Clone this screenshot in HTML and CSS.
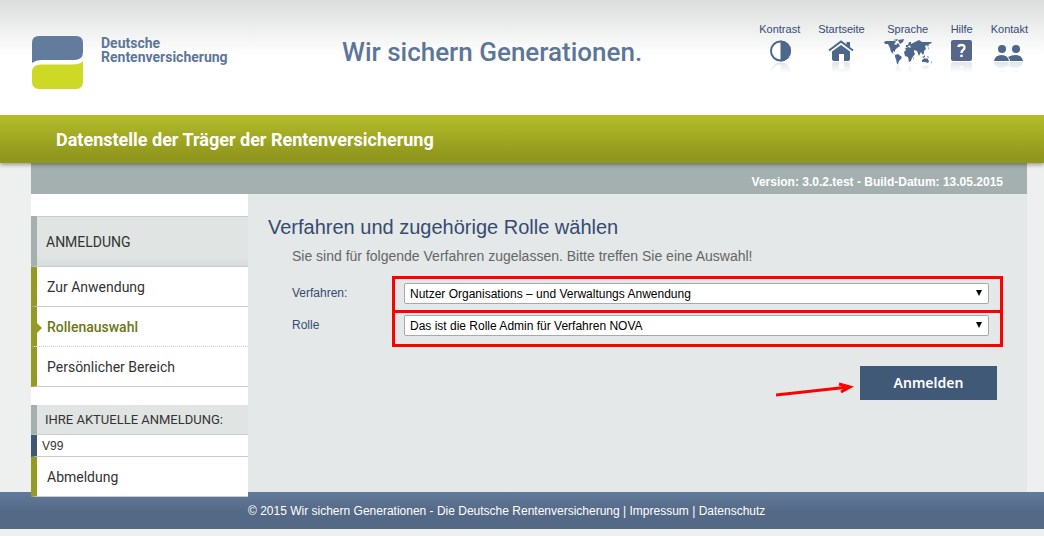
FILE: index.html
```html
<!DOCTYPE html>
<html lang="de">
<head>
<meta charset="utf-8">
<meta name="viewport" content="width=device-width, initial-scale=1">
<title>Deutsche Rentenversicherung</title>
<link rel="stylesheet" href="styles.css">
</head>
<body>
<header class="header">
  <a class="brand" href="#">
    <svg class="brand-mark" viewBox="0 0 51 53" aria-hidden="true">
      <path fill="#637b9c" d="M0 27V7Q0 0 7 0H44Q51 0 51 7V16Q51 24 42 24H10Q4 24 0 27Z"/>
      <path fill="#ced925" d="M51 25V46Q51 53 44 53H7Q0 53 0 46V36Q0 28.500 9 28.500H40Q48 28.500 51 25Z"/>
    </svg>
    <span class="brand-name">Deutsche<br>Rentenversicherung</span>
  </a>
  <p class="slogan">Wir sichern Generationen.</p>
  <nav class="tools" aria-label="Service">
    <a class="tool" href="#"><span>Kontrast</span>
      <svg class="icon" width="22" height="36" viewBox="0 0 22 36" aria-hidden="true">
        <defs>
          <linearGradient id="fade" gradientUnits="userSpaceOnUse" x1="0" y1="22" x2="0" y2="34"><stop offset="0" stop-color="#fff" stop-opacity=".2"/><stop offset="1" stop-color="#fff" stop-opacity="0"/></linearGradient>
          <mask id="fade-mask" maskUnits="userSpaceOnUse" x="0" y="22" width="60" height="30"><rect y="22" width="60" height="30" fill="url(#fade)"/></mask>
        </defs>
        <g id="contrast"><circle cx="11.500" cy="12" r="9.500" fill="#fff" stroke="#4c678a" stroke-width="2"/><path fill="#4c678a" d="M11.500 1.500a10.500 10.500 0 0 1 0 21z"/></g>
        <g mask="url(#fade-mask)"><use href="#contrast" transform="matrix(1 0 0 -1 0 46)"/></g>
      </svg></a>
    <a class="tool" href="#"><span>Startseite</span>
      <svg class="icon" width="28" height="36" viewBox="0 0 28 36" aria-hidden="true">
        <g id="home"><path d="M2 11.500 14 2.500 26 11.500" fill="none" stroke="#4c678a" stroke-width="2"/><path fill="#4c678a" d="M19.500 3H23v6l-3.500-3zM5 12.500 14 6l9 6.500V20q0 2-2 2h-4v-7h-5v7H7q-2 0-2-2z"/></g>
        <g mask="url(#fade-mask)"><use href="#home" transform="matrix(1 0 0 -1 0 45)"/></g>
      </svg></a>
    <a class="tool" href="#"><span>Sprache</span>
      <svg class="icon" width="50" height="40" viewBox="0 0 50 40" aria-hidden="true">
        <g id="world" fill="#4c678a"><path d="M1 3 3 2 8 2 12 2 13 3 11 5 13 6 15 4 17 7 14 9 12 11 12 13 10 12 10 14 12 16 15 15 19 18 18 20 16 22 15 25 14 25 13 20 12 18 12 16 8 13 7 9 5 5 2 5ZM10 1 15 0 14 2ZM15 1 21 0 20 3 17 5ZM23 8 23 6 25 6 26 3 28 3 28 5 32 3 36 1 39 3 43 3 48 3 49 4 46 5 45 8 44 6 42 7 43 10 41 12 41 14 40 16 38 13 36 17 34 12 31 11 31 13 32 15 29 19 28 22 26 23 25 18 22 17 21 13 23 11 22 9 26 8 27 9 28 8 26 6 25 8ZM30 19 31 18 30 21ZM39 17 40 18 42 16 42 18 40 19ZM39 21 42 19 43 20 44 19 46 22 45 24 42 23 39 23ZM48 23 49 22 48 25ZM44 17 46 18 45 19ZM45 9 46 8 45 11Z"/></g>
        <g mask="url(#fade-mask)"><use href="#world" transform="matrix(1 0 0 -1 0 50)"/></g>
      </svg></a>
    <a class="tool" href="#"><span>Hilfe</span>
      <svg class="icon" width="21" height="36" viewBox="0 0 21 36" aria-hidden="true">
        <g id="help"><rect y="1" width="21" height="21" rx="2" fill="#566787"/><path d="M7.500 8q0-2 3-2t3 2.500q0 1.500-1.500 2.500T10.500 14" fill="none" stroke="#fff" stroke-width="2.400"/><path fill="#fff" d="M9.300 15.600h2.400V18H9.300z"/></g>
        <g mask="url(#fade-mask)"><use href="#help" transform="matrix(1 0 0 -1 0 45)"/></g>
      </svg></a>
    <a class="tool" href="#"><span>Kontakt</span>
      <svg class="icon" width="30" height="36" viewBox="0 0 30 36" aria-hidden="true">
        <g id="people" fill="#4c678a"><circle cx="8" cy="10" r="4"/><circle cx="22" cy="10" r="4"/><path d="M0 22q1-6 7.500-6T15 22zM16 22q0-2-2-4 3-2 8-2 6 0 7 6z"/></g>
        <g mask="url(#fade-mask)"><use href="#people" transform="matrix(1 0 0 -1 0 45)"/></g>
      </svg></a>
  </nav>
</header>
<div class="title-bar">Datenstelle der Träger der Rentenversicherung</div>
<div class="page">
  <div class="version">Version: 3.0.2.test - Build-Datum: 13.05.2015</div>
  <div class="columns">
    <aside class="sidebar">
      <h2 class="side-head">ANMELDUNG</h2>
      <nav class="menu" aria-label="Anmeldung">
        <a class="menu-item" href="#">Zur Anwendung</a>
        <a class="menu-item menu-item-active" href="#" aria-current="page">Rollenauswahl</a>
        <a class="menu-item" href="#">Persönlicher Bereich</a>
      </nav>
      <h2 class="side-head side-head-small">IHRE AKTUELLE ANMELDUNG:</h2>
      <p class="user">V99</p>
      <a class="menu-item" href="#">Abmeldung</a>
    </aside>
    <main class="content">
      <h1 class="heading">Verfahren und zugehörige Rolle wählen</h1>
      <p class="intro">Sie sind für folgende Verfahren zugelassen. Bitte treffen Sie eine Auswahl!</p>
      <form class="form">
        <div class="row">
          <label class="label" for="verfahren">Verfahren:</label>
          <div class="field field-first"><div class="select-box"><select class="select" id="verfahren"><option>Nutzer Organisations – und Verwaltungs Anwendung</option></select></div></div>
        </div>
        <div class="row">
          <label class="label label-next" for="rolle">Rolle</label>
          <div class="field"><div class="select-box"><select class="select" id="rolle"><option>Das ist die Rolle Admin für Verfahren NOVA</option></select></div></div>
        </div>
        <div class="actions">
          <svg class="arrow" width="78" height="20" viewBox="0 0 78 20" aria-hidden="true"><path d="M0 15 73 7M63 4 74 7 65 12" fill="none" stroke="#f00" stroke-width="3"/></svg>
          <button class="submit" type="button">Anmelden</button>
        </div>
      </form>
    </main>
  </div>
</div>
<footer class="footer">© 2015 Wir sichern Generationen - Die Deutsche Rentenversicherung | <a href="#">Impressum</a> | <a href="#">Datenschutz</a></footer>
</body>
</html>
```
FILE: styles.css
```css
* { box-sizing: border-box; }
body { margin: 0; background: #eef0f0; font: 12px/16px "Liberation Sans", Arial, sans-serif; color: #333; }
a { color: inherit; text-decoration: none; }
h1, h2, p { margin: 0; font-weight: 400; }

.header { display: flex; align-items: flex-start; height: 115px; padding: 0 16px 0 32px; background: linear-gradient(#dbdddd, #fff 55px); }
.brand { display: flex; gap: 18px; width: 310px; padding-top: 36px; color: #5d7698; }
.brand-mark { width: 51px; height: 53px; }
.brand-name { font: 700 14px/14px Roboto, sans-serif; }
.slogan { padding-top: 36px; font: 500 26px/32px Roboto, sans-serif; color: #5d7698; white-space: nowrap; }
.tools { display: flex; gap: 18px; margin-left: auto; padding-top: 21px; font-size: 11px; color: #334d73; }
.tool { display: flex; flex-direction: column; align-items: center; }
.icon { display: block; margin-top: 2px; }

.title-bar { position: relative; padding: 1px 56px 0; background: linear-gradient(#b3bd29, #91961d 42px); color: #fff; font: 700 18px/47px Roboto, sans-serif; box-shadow: 0 2px 4px rgba(0, 0, 0, .35); clip-path: inset(0 0 -8px); }

.page { margin: 0 17px 0 31px; background: #e4e8e8; }
.version { padding: 11px 24px 3px; background: #a4b0b0; color: #fff; font-weight: 700; line-height: 17px; text-align: right; }
.columns { display: flex; }
.sidebar { position: relative; flex: 0 0 217px; margin-bottom: -5px; padding-top: 22px; background: #fff; font-family: Roboto, sans-serif; }
.side-head { padding: 3px 0 0 9px; border-left: 6px solid #a4b0b0; border-bottom: 1px solid #ccc; background: linear-gradient(#e0e4e3 80%, #d5dddc); box-shadow: inset 0 1px #ccc; font-size: 14px; line-height: 47px; }
.side-head-small { margin-top: 18px; padding: 0 0 0 8px; background: #e0e4e3; box-shadow: none; font-size: 13px; line-height: 29px; }
.menu-item { display: block; position: relative; padding: 2px 0 0 10px; border-left: 6px solid #939b25; border-bottom: 1px solid #ccc; font-size: 14px; line-height: 37px; }
.menu-item-active { border-bottom-style: dotted; color: #6c7816; font-weight: 500; }
.menu-item-active::before { content: ""; position: absolute; left: 0; top: 16px; border: 5px solid transparent; border-left-color: #939b25; border-right-width: 0; }
.user { padding: 1px 0 0 5px; border-left: 6px solid #3f5876; border-bottom: 1px solid #ccc; font: 12px/20px "Liberation Sans", sans-serif; }

.content { flex: 1; min-width: 0; padding: 20px 24px 0 20px; }
.heading { color: #364b6f; font-size: 20px; line-height: 26px; }
.intro { padding-left: 24px; margin-top: 6px; color: #666; font-size: 14px; line-height: 20px; }
.form { padding-left: 24px; margin-top: 10px; }
.row { display: flex; }
.label { flex: 0 0 100px; padding-top: 8px; line-height: 18px; color: #364b6f; }
.label-next { padding-top: 3px; }
.field { flex: 1; padding: 2px 11px 8px 9px; border: 3px solid #f00; border-top: 0; }
.field-first { padding: 4px 11px 6px 9px; border-top: 3px solid #f00; }
.select-box { position: relative; }
.select-box::after { content: ""; position: absolute; right: 7px; top: 7px; border: 3px solid transparent; border-top: 6px solid #000; border-bottom: 0; pointer-events: none; }
.select { display: block; width: 100%; height: 21px; padding: 1px 5px 0; border: 1px solid #a9a9a9; border-radius: 2px; appearance: none; color: #000; font: 12px/18px "Liberation Sans", sans-serif; background: #fff; }
.actions { display: flex; justify-content: flex-end; align-items: flex-end; gap: 6px; padding: 19px 6px 0 0; }
.submit { width: 137px; height: 34px; padding: 0; border: 0; background: #405977; color: #fff; font: 600 14px/34px "Noto Sans", sans-serif; }

.footer { padding: 1px 0 0 248px; background: linear-gradient(#627a9b, #546985 20px); color: #fff; line-height: 36px; white-space: nowrap; }
```
